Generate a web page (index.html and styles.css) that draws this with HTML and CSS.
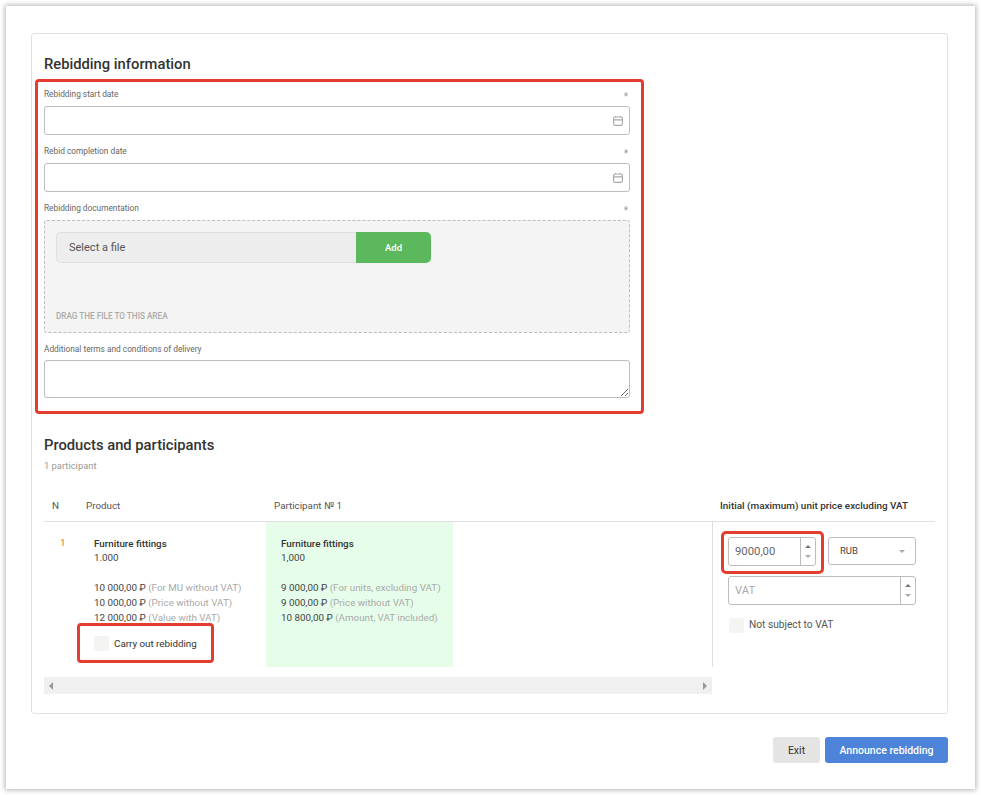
FILE: index.html
```html
<!DOCTYPE html>
<html lang="en">
<head>
    <meta charset="UTF-8">
    <meta name="viewport" content="width=device-width, initial-scale=1.0">
    <title>Rebidding</title>
    <link rel="stylesheet" href="styles.css">
</head>
<body>

<div class="sheet">
    <div class="card">
        <h2 class="title">Rebidding information</h2>

        <!-- Dates and documents -->
        <div class="mark mark-form">
            <div class="field">
                <div class="label-row"><span>Rebidding start date</span><span class="req">*</span></div>
                <div class="date-box">
                    <input type="text" class="input">
                    <svg class="cal" width="10" height="10" viewBox="0 0 10 10" fill="none" stroke="#aaa" stroke-width="1.2"><rect x="0.6" y="1" width="8.8" height="8.4" rx="1.5"/><path d="M0.6 3.8h8.8M2.5 0v1M7.5 0v1"/></svg>
                </div>
            </div>
            <div class="field">
                <div class="label-row"><span>Rebid completion date</span><span class="req">*</span></div>
                <div class="date-box">
                    <input type="text" class="input">
                    <svg class="cal" width="10" height="10" viewBox="0 0 10 10" fill="none" stroke="#aaa" stroke-width="1.2"><rect x="0.6" y="1" width="8.8" height="8.4" rx="1.5"/><path d="M0.6 3.8h8.8M2.5 0v1M7.5 0v1"/></svg>
                </div>
            </div>
            <div class="field">
                <div class="label-row"><span>Rebidding documentation</span><span class="req">*</span></div>
                <div class="dropzone">
                    <div class="file-row">
                        <div class="file-name">Select a file</div>
                        <button class="button button-add">Add</button>
                    </div>
                    <div class="drop-hint">DRAG THE FILE TO THIS AREA</div>
                </div>
            </div>
            <div class="field field-last">
                <div class="label-row"><span>Additional terms and conditions of delivery</span></div>
                <textarea class="terms"></textarea>
            </div>
        </div>

        <h2 class="title title-products">Products and participants</h2>
        <div class="count">1 participant</div>

        <!-- Products table -->
        <div class="products">
            <div class="head-row">
                <div class="col-n">N</div>
                <div class="col-product">Product</div>
                <div class="col-part">Participant № 1</div>
                <div class="col-price">Initial (maximum) unit price excluding VAT</div>
            </div>
            <div class="body-row">
                <div class="scroll-part">
                    <div class="n-cell">1</div>
                    <div class="product-cell">
                        <div class="name">Furniture fittings</div>
                        <div class="qty">1.000</div>
                        <div class="prices">
                            <div>10 000,00 ₽ <span class="muted">(For MU without VAT)</span></div>
                            <div>10 000,00 ₽ <span class="muted">(Price without VAT)</span></div>
                            <div>12 000,00 ₽ <span class="muted">(Value with VAT)</span></div>
                        </div>
                        <div class="mark mark-check">
                            <span class="check"></span>Carry out rebidding
                        </div>
                    </div>
                    <div class="part-cell">
                        <div class="name">Furniture fittings</div>
                        <div class="qty">1,000</div>
                        <div class="prices">
                            <div>9 000,00 ₽ <span class="muted">(For units, excluding VAT)</span></div>
                            <div>9 000,00 ₽ <span class="muted">(Price without VAT)</span></div>
                            <div>10 800,00 ₽ <span class="muted">(Amount, VAT included)</span></div>
                        </div>
                    </div>
                </div>
                <div class="price-cell">
                    <div class="price-top">
                        <div class="mark mark-price">
                            <div class="spin-box spin-short">
                                <input type="text" class="spin-input" value="9000,00">
                                <div class="spin"><i class="up"></i><i class="down"></i></div>
                            </div>
                        </div>
                        <div class="currency">RUB<i class="caret"></i></div>
                    </div>
                    <div class="spin-box spin-vat">
                        <input type="text" class="spin-input" placeholder="VAT">
                        <div class="spin"><i class="up"></i><i class="down"></i></div>
                    </div>
                    <div class="vat-check"><span class="check"></span>Not subject to VAT</div>
                </div>
            </div>
            <div class="scrollbar"><i class="arrow-left"></i><i class="arrow-right"></i></div>
        </div>
    </div>

    <div class="actions">
        <button class="button button-exit">Exit</button>
        <button class="button button-announce">Announce rebidding</button>
    </div>
</div>

</body>
</html>
```

FILE: styles.css
```css
* {
    box-sizing: border-box;
}
body {
    margin: 0;
    background: #fff;
    font-family: Roboto, "Liberation Sans", sans-serif;
    color: #333;
}
.sheet {
    width: 969px;
    height: 783px;
    margin: 6px;
    padding: 27px 27px 0 25px;
    background: #fff;
    box-shadow: 0 0 5px 1px rgba(0, 0, 0, 0.3);
}
.card {
    height: 681px;
    border: 1px solid #e0e0e0;
    border-radius: 3px;
    padding: 20px 12px 0 12px;
}
.title {
    margin: 0;
    font-size: 14.75px;
    line-height: 20px;
    font-weight: 500;
    color: #333;
}
.mark {
    border: 3px solid #e53c30;
    border-radius: 4px;
}
.mark-form {
    width: 609px;
    height: 335px;
    margin: 5px 0 0 -9px;
    padding: 5px 11px 0 6px;
}
.field {
    margin-bottom: 9px;
}
.label-row {
    display: flex;
    justify-content: space-between;
    height: 19px;
    font-size: 8.3px;
    line-height: 14px;
    color: #666;
}
.req {
    color: #999;
    font-size: 10px;
    padding: 3px 2px 0 0;
}
.date-box {
    position: relative;
}
.input {
    display: block;
    width: 100%;
    height: 29px;
    border: 1px solid #bdbdbd;
    border-radius: 3px;
    background: #fff;
}
.cal {
    position: absolute;
    right: 7px;
    top: 10px;
}
.dropzone {
    height: 113px;
    border: 1px dashed #bdbdbd;
    border-radius: 3px;
    background: #f4f4f4;
    padding: 11px 11px 0 11px;
}
.file-row {
    display: flex;
    height: 31px;
}
.file-name {
    width: 300px;
    background: #ededed;
    border: 1px solid #e0e0e0;
    border-right: none;
    border-radius: 5px 0 0 5px;
    padding-left: 12px;
    font-size: 11px;
    line-height: 29px;
    color: #555;
}
.button {
    border: none;
    font-family: inherit;
    cursor: pointer;
}
.button-add {
    width: 75px;
    background: #5cb85c;
    color: #fff;
    font-size: 9.5px;
    font-weight: 500;
    border-radius: 0 5px 5px 0;
}
.drop-hint {
    margin-top: 47px;
    font-size: 8.2px;
    line-height: 12px;
    font-weight: 500;
    color: #aaa;
}
.field-last {
    margin: 0;
}
.field-last .label-row {
    height: 18px;
}
.terms {
    display: block;
    width: 100%;
    height: 38px;
    border: 1px solid #bdbdbd;
    border-radius: 3px;
    background: #fff;
    resize: vertical;
}
.title-products {
    margin-top: 21px;
}
.count {
    margin-top: 5px;
    font-size: 9.4px;
    line-height: 12px;
    color: #999;
}
.products {
    margin-top: 19px;
    font-size: 9.8px;
}
.head-row {
    display: flex;
    height: 31px;
    align-items: center;
    padding-bottom: 2px;
    border-bottom: 1px solid #e0e0e0;
    color: #555;
}
.col-n {
    width: 42px;
    padding-left: 8px;
}
.col-product {
    width: 188px;
}
.col-part {
    width: 446px;
}
.col-price {
    font-size: 9.95px;
    font-weight: 500;
    color: #333;
    white-space: nowrap;
}
.body-row {
    display: flex;
    height: 145px;
}
.scroll-part {
    display: flex;
    width: 669px;
    border-right: 1px solid #e0e0e0;
}
.n-cell {
    width: 50px;
    padding: 15px 0 0 16px;
    color: #b8863c;
}
.product-cell {
    width: 172px;
    padding-top: 15px;
}
.part-cell {
    width: 187px;
    padding: 15px 0 0 15px;
    background: #e6fde9;
}
.name {
    font-weight: 500;
    line-height: 14px;
    color: #333;
}
.qty {
    line-height: 14px;
    color: #444;
}
.prices {
    margin-top: 15px;
    line-height: 15px;
    color: #444;
    white-space: nowrap;
}
.muted {
    color: #aaa;
}
.check {
    display: inline-block;
    width: 15px;
    height: 15px;
    margin-right: 5px;
    background: #f4f4f2;
    border-radius: 2px;
    vertical-align: middle;
}
.mark-check {
    display: flex;
    align-items: center;
    width: 137px;
    height: 40px;
    margin: -2px 0 0 -17px;
    padding-left: 14px;
    color: #333;
}
.price-cell {
    padding: 9px 0 0 9px;
}
.price-top {
    display: flex;
    align-items: flex-start;
}
.mark-price {
    width: 103px;
    height: 43px;
    margin-left: -1px;
    padding: 3px 5px 3px 4px;
    border-radius: 5px;
}
.spin-box {
    display: flex;
    height: 29px;
    border: 1px solid #bdbdbd;
    border-radius: 3px;
    background: #fff;
}
.spin-short {
    width: 88px;
}
.spin-vat {
    width: 188px;
    margin: 2px 0 0 6px;
}
.spin-input {
    flex: 1;
    min-width: 0;
    border: none;
    background: transparent;
    padding: 0 6px;
    font-family: inherit;
    font-size: 11.3px;
    color: #666;
}
.spin-input::placeholder {
    color: #aaa;
}
.spin {
    display: flex;
    flex-direction: column;
    justify-content: space-around;
    align-items: center;
    width: 15px;
    padding: 4px 0;
    border-left: 1px solid #bdbdbd;
}
.up, .down {
    width: 0;
    height: 0;
    border-left: 3px solid transparent;
    border-right: 3px solid transparent;
}
.up {
    border-bottom: 3px solid #777;
}
.down {
    border-top: 3px solid #aaa;
}
.currency {
    position: relative;
    width: 88px;
    height: 28px;
    margin: 6px 0 0 4px;
    border: 1px solid #bdbdbd;
    border-radius: 3px;
    padding-left: 11px;
    line-height: 26px;
    font-size: 9.5px;
    color: #444;
}
.caret {
    position: absolute;
    right: 10px;
    top: 12px;
    border-left: 3px solid transparent;
    border-right: 3px solid transparent;
    border-top: 3px solid #aaa;
}
.vat-check {
    margin: 13px 0 0 7px;
    font-size: 10.2px;
    color: #555;
}
.scrollbar {
    display: flex;
    justify-content: space-between;
    align-items: center;
    width: 668px;
    height: 17px;
    margin-top: 10px;
    padding: 0 5px;
    background: #f0f0f0;
}
.arrow-left, .arrow-right {
    border-top: 4px solid transparent;
    border-bottom: 4px solid transparent;
}
.arrow-left {
    border-right: 4px solid #999;
}
.arrow-right {
    border-left: 4px solid #999;
}
.actions {
    display: flex;
    justify-content: flex-end;
    gap: 5px;
    margin-top: 23px;
}
.button-exit, .button-announce {
    height: 26px;
    border-radius: 3px;
    font-size: 10.5px;
}
.button-exit {
    width: 47px;
    background: #e4e4e4;
    color: #333;
}
.button-announce {
    width: 123px;
    background: #4d83d9;
    color: #fff;
    font-weight: 500;
}
```
